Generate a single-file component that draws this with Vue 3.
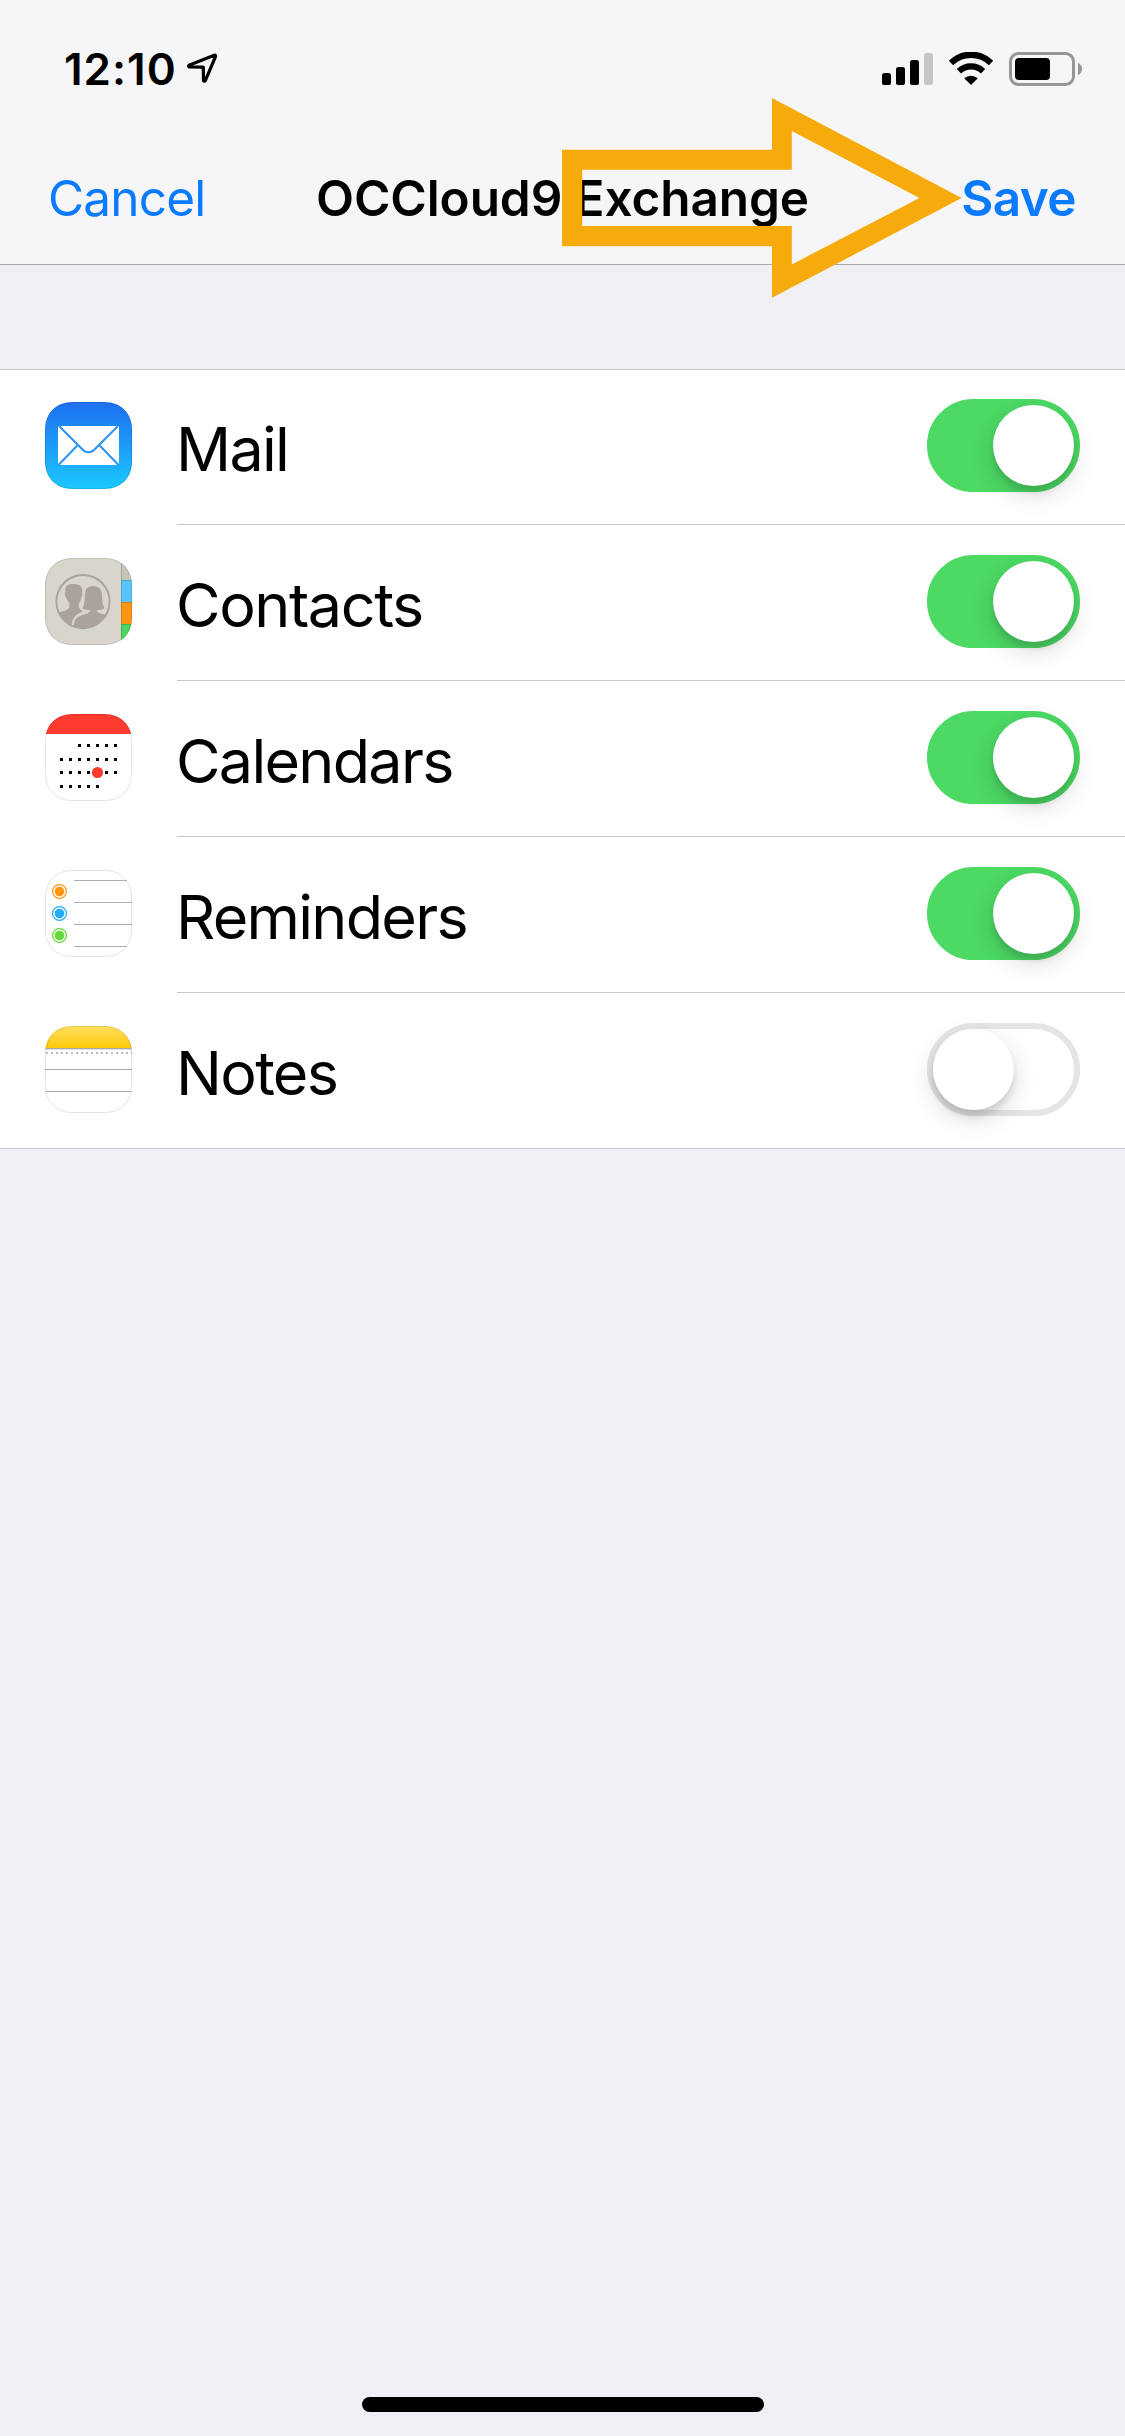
<script setup>
import { ref } from 'vue'

const services = ref([
  { id: 'mail', label: 'Mail', on: true },
  { id: 'contacts', label: 'Contacts', on: true },
  { id: 'calendars', label: 'Calendars', on: true },
  { id: 'reminders', label: 'Reminders', on: true },
  { id: 'notes', label: 'Notes', on: false },
])

// Calendar glyph: [y, first column, last column]
const weeks = [[30, 2, 6], [44, 0, 6], [57, 0, 6], [71, 0, 4]]
const days = weeks.flatMap(([y, from, to]) =>
  Array.from({ length: to - from + 1 }, (_, i) => ({ x: 15 + 9 * (from + i), y })),
).filter((d) => !(d.y === 57 && d.x === 51))

const bullets = [
  { y: 21.5, color: '#ff9513' },
  { y: 43.5, color: '#24adfb' },
  { y: 65.5, color: '#63da38' },
]
</script>

<template>
  <div class="screen">
    <header class="top">
      <div class="status">
        <div class="clock">
          <span class="time">12:10</span>
          <svg class="location" width="32" height="32" viewBox="0 0 32 32">
            <path d="M28.2 3.3 L3 13.3 Q2.2 14.3 3.2 14.9 L17.3 15.2 L17.5 28.6 Q18.3 29.8 19.2 28.8 L29.6 4.4 Q29.6 2.9 28.2 3.3 Z" fill="none" stroke="#000" stroke-width="3.2" stroke-linejoin="round" />
          </svg>
        </div>
        <div class="indicators">
          <svg width="51" height="34" viewBox="0 0 51 34">
            <rect x="0" y="21" width="9" height="12" rx="2.6" />
            <rect x="14" y="15" width="9" height="18" rx="2.6" />
            <rect x="28" y="8" width="9" height="25" rx="2.6" />
            <rect x="42" y="1" width="9" height="32" rx="2.6" fill="#c5c5c6" />
          </svg>
          <svg class="wifi" width="46" height="34" viewBox="0 0 46 34">
            <path d="M3 10.9 A28.6 28.6 0 0 1 43 10.9" fill="none" stroke="#000" stroke-width="6.3" />
            <path d="M10.9 19.2 A17.4 17.4 0 0 1 35.1 19.2" fill="none" stroke="#000" stroke-width="6.2" />
            <path d="M16.2 26.3 A10.4 10.4 0 0 1 29.8 26.3 L23 33.1 Z" />
          </svg>
          <svg width="74" height="34" viewBox="0 0 74 34">
            <rect x="1.5" y="1.5" width="63" height="31" rx="8" fill="none" stroke="#979799" stroke-width="3" />
            <rect x="6" y="6" width="35" height="22" rx="4" />
            <path d="M69 10.8 Q73 13 73 17 Q73 21 69 23.2 Z" fill="#979799" />
          </svg>
        </div>
      </div>
      <nav class="nav">
        <a class="action cancel">Cancel</a>
        <h1 class="title">OCCloud9 Exchange</h1>
        <a class="action save">Save</a>
      </nav>
      <svg class="pointer" width="400" height="200" viewBox="0 0 400 200">
        <path fill-rule="evenodd" fill="#f7ab0a" d="M0 51.7 H210 V0 L399.7 100 L210 199.7 V148.3 H0 Z M20.2 71.7 V128 H229.8 V166.4 L357.5 100 L229.8 33 V71.7 Z" />
      </svg>
    </header>

    <main class="list">
      <div v-for="s in services" :key="s.id" class="row">
        <svg class="icon" width="87" height="87" viewBox="0 0 87 87">
          <defs>
            <clipPath :id="'clip-' + s.id">
              <path d="M28 0 H59 C76 0 87 11 87 28 V59 C87 76 76 87 59 87 H28 C11 87 0 76 0 59 V28 C0 11 11 0 28 0 Z" />
            </clipPath>
            <linearGradient id="mail-sky" x1="0" y1="0" x2="0" y2="1">
              <stop offset="0" stop-color="#1e6ff2" />
              <stop offset="1" stop-color="#1bc8fd" />
            </linearGradient>
            <linearGradient id="note-top" x1="0" y1="0" x2="0" y2="1">
              <stop offset="0" stop-color="#ffdf5e" />
              <stop offset="1" stop-color="#fdc90a" />
            </linearGradient>
            <clipPath id="disc"><circle cx="38" cy="43.6" r="26.5" /></clipPath>
          </defs>
          <g :clip-path="`url(#clip-${s.id})`">
            <template v-if="s.id === 'mail'">
              <rect width="87" height="87" fill="url(#mail-sky)" />
              <rect x="13" y="24" width="61" height="39" rx="1" fill="#fff" />
              <g fill="none" stroke="#2a94f7" stroke-width="2">
                <path d="M14 24 L36 46 Q43.5 54.5 51 46 L73 24" />
                <path d="M13.5 63 L32.3 43.5 M73.5 63 L54.7 43.5" />
              </g>
            </template>
            <template v-else-if="s.id === 'contacts'">
              <rect width="87" height="87" fill="#d8d5cc" />
              <rect x="76" y="0" width="11" height="22" fill="#c8c3b8" />
              <rect x="76" y="22" width="11" height="22" fill="#5ac4fa" />
              <rect x="76" y="44" width="11" height="22" fill="#ff9513" />
              <rect x="76" y="66" width="11" height="21" fill="#4cd562" />
              <path d="M76.5 0 V87 M76 22.5 H87 M76 44.5 H87 M76 66.5 H87" stroke="#000" stroke-opacity=".16" fill="none" />
              <g clip-path="url(#disc)" fill="#aaa29c">
                <path d="M10 56 L17 53.5 Q23 52 24.3 49.5 V45 Q21.8 42.5 21.2 39.8 Q19.6 38.5 19.8 35.4 Q20.2 34 20.6 34 Q18.5 26 28.5 26 Q38.5 26 37 34.5 Q38 35.5 37 38.5 L36.2 40 Q35.8 43 33.8 45.5 V49.5 Q35 52 38 53.5 Q28 57 26.6 65 V72 H10 Z" />
                <path d="M29 72 V66 Q29.5 59.5 37.5 57 Q45 55.5 45.3 52.3 Q40.5 52.3 37.5 50.5 Q39.8 46 39.8 38 Q39.6 28.2 47.5 28 Q57 27.8 57 38 Q57 46 59.5 50.5 Q56.5 52.3 51.8 52.3 Q52 54.5 56 55.5 L68 59 V72 Z" />
              </g>
              <circle cx="38" cy="43.6" r="26.6" fill="none" stroke="#aaa29c" stroke-width="1.9" />
            </template>
            <template v-else-if="s.id === 'calendars'">
              <rect width="87" height="87" fill="#fff" />
              <rect width="87" height="20" fill="#ff3b30" />
              <rect v-for="d in days" :key="`${d.x}-${d.y}`" :x="d.x" :y="d.y" width="3" height="3" fill="#000" />
              <circle cx="52.5" cy="58.5" r="5.6" fill="#ff3b30" />
            </template>
            <template v-else-if="s.id === 'reminders'">
              <rect width="87" height="87" fill="#fff" />
              <path d="M29 10.5 H87 M29 32.5 H87 M29 54.5 H87 M29 76.5 H87" stroke="#b0b0b2" fill="none" />
              <g v-for="b in bullets" :key="b.y">
                <circle cx="14.5" :cy="b.y" r="6.9" fill="none" :stroke="b.color" stroke-width="1.3" />
                <circle cx="14.5" :cy="b.y" r="4.8" :fill="b.color" />
              </g>
            </template>
            <template v-else>
              <rect width="87" height="87" fill="#fff" />
              <rect width="87" height="22" fill="url(#note-top)" />
              <path d="M0 23.5 H87" stroke="#dcdcde" />
              <path d="M0 22.5 H87 M0 43.5 H87 M0 65.5 H87" stroke="#a9a9ab" />
              <path d="M1 27 H87" stroke="#b9b9bb" stroke-width="2" stroke-dasharray="2 3" />
            </template>
          </g>
          <path d="M28 .5 H59 C76 .5 86.5 11 86.5 28 V59 C86.5 76 76 86.5 59 86.5 H28 C11 86.5 .5 76 .5 59 V28 C.5 11 11 .5 28 .5 Z" fill="none" stroke="#000" stroke-opacity=".11" />
        </svg>
        <div class="cell">
          <span class="label" :class="s.id">{{ s.label }}</span>
          <button class="switch" :class="{ on: s.on }" role="switch" :aria-checked="s.on" :aria-label="s.label" @click="s.on = !s.on">
            <span class="knob"></span>
          </button>
        </div>
      </div>
    </main>

    <footer class="bottom"><div class="home"></div></footer>
  </div>
</template>

<style>
body {
  margin: 0;
  background: #efeff4;
}
</style>

<style scoped>
.screen {
  width: 1125px;
  height: 2436px;
  display: flex;
  flex-direction: column;
  background: #efeff4;
  color: #000;
  font-family: Inter, "Liberation Sans", sans-serif;
  overflow: hidden;
}
.top {
  position: relative;
  height: 264px;
  background: #f6f6f8;
  border-bottom: 1px solid #a7a7aa;
}
.status {
  height: 132px;
  box-sizing: border-box;
  padding: 52px 42px 0 64px;
  display: flex;
  justify-content: space-between;
  align-items: flex-start;
}
.clock {
  display: flex;
  align-items: flex-start;
}
.time {
  width: 122px;
  font-size: 44px;
  line-height: 34px;
  font-weight: 600;
  letter-spacing: 1px;
  white-space: nowrap;
}
.indicators {
  display: flex;
}
.wifi {
  margin: 0 15px;
}
.nav {
  height: 132px;
  display: grid;
  grid-template-columns: 1fr auto 1fr;
  align-items: center;
  padding: 0 48px;
  font-size: 49.5px;
  line-height: 60px;
  white-space: nowrap;
}
.action {
  color: #0a7aff;
}
.cancel {
  letter-spacing: -0.8px;
}
.save {
  justify-self: end;
  font-weight: 600;
  letter-spacing: -0.6px;
  padding-right: 1px;
}
.title {
  margin: 0;
  font: inherit;
  font-weight: 600;
  letter-spacing: -0.1px;
}
.pointer {
  position: absolute;
  left: 562px;
  top: 98px;
}
.list {
  margin-top: 104px;
  background: #fff;
  box-shadow: inset 0 1px 0 #c8c7cc;
}
.row {
  height: 156px;
  display: flex;
  padding-left: 45px;
}
.row:last-child {
  border-bottom: 1px solid #c8c7cc;
  height: 155px;
}
.icon {
  margin-top: 33px;
  flex: none;
}
.cell {
  flex: 1;
  margin-left: 45px;
  padding-right: 45px;
  display: flex;
  justify-content: space-between;
  align-items: flex-start;
  border-bottom: 1px solid #c8c7cc;
}
.row:last-child .cell {
  border-bottom: 0;
}
.label {
  margin: 43px 0 0 -1px;
  font-size: 61px;
  line-height: 74px;
  letter-spacing: -1.7px;
}
.label.contacts {
  letter-spacing: -1.4px;
}
.switch {
  margin: 30px 0 0;
  width: 153px;
  height: 93px;
  box-sizing: border-box;
  padding: 0;
  display: flex;
  border: 6px solid #e5e5e5;
  border-radius: 47px;
  background: #fff;
}
.switch.on {
  border-color: #4cd964;
  background: #4cd964;
  justify-content: flex-end;
}
.knob {
  width: 81px;
  height: 81px;
  border-radius: 50%;
  background: #fff;
  box-shadow: 0 9px 24px rgba(0, 0, 0, 0.15), 0 6px 6px rgba(0, 0, 0, 0.1);
}
.bottom {
  margin-top: auto;
  padding-bottom: 24px;
  display: flex;
  justify-content: center;
}
.home {
  width: 402px;
  height: 15px;
  border-radius: 8px;
  background: #000;
}
</style>
